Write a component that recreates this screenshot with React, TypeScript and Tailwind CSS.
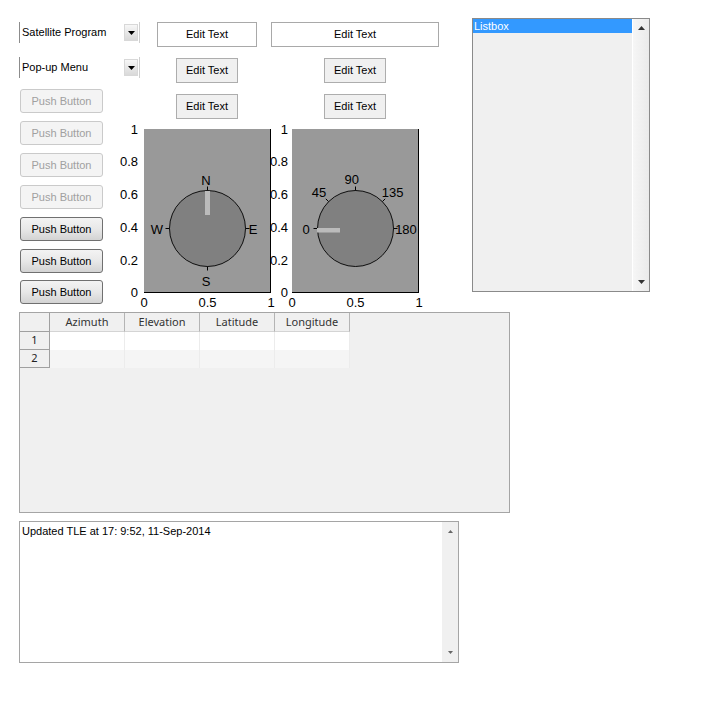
import React from "react";

const yTicks = [
  { v: 1, t: "1" },
  { v: 0.8, t: "0.8" },
  { v: 0.6, t: "0.6" },
  { v: 0.4, t: "0.4" },
  { v: 0.2, t: "0.2" },
  { v: 0, t: "0" },
];

function Arrow({ down, color = "#000", small }: { down?: boolean; color?: string; small?: boolean }) {
  const w = small ? 5 : 7;
  const h = small ? 3 : 4;
  return (
    <svg width={w} height={h} viewBox={`0 0 ${w} ${h}`} className="block">
      <path d={down ? `M0 0H${w}L${w / 2} ${h}Z` : `M0 ${h}H${w}L${w / 2} 0Z`} fill={color} />
    </svg>
  );
}

function Popup({ label }: { label: string }) {
  return (
    <div className="ml-[19px] w-[121px] h-[21px] flex items-center border-l border-l-[#8c8c8c] border-r border-r-[#d0d0d0] bg-white">
      <span className="pl-[2px] flex-1 whitespace-nowrap">{label}</span>
      <div className="mr-px w-[14px] h-[17px] flex items-center justify-center bg-linear-to-b from-[#f7f7f7] to-[#d9d9d9] border border-[#d8d8d8]">
        <Arrow down />
      </div>
    </div>
  );
}

function EditText({ className, gray }: { className: string; gray?: boolean }) {
  return (
    <div
      className={`h-[25px] flex items-center justify-center border whitespace-nowrap ${
        gray ? "bg-[#f0f0f0] border-[#adadad]" : "bg-white border-[#a9a9a9]"
      } ${className}`}
    >
      Edit Text
    </div>
  );
}

function PushButton({ enabled }: { enabled?: boolean }) {
  return enabled ? (
    <div className="h-[24px] flex items-center justify-center rounded-[3px] border border-[#707070] bg-linear-to-b from-[#f3f3f3] via-[#e8e8e8] to-[#d3d3d3] text-black">
      Push Button
    </div>
  ) : (
    <div className="h-[24px] flex items-center justify-center rounded-[3px] border border-[#cacaca] bg-[#f4f4f4] text-[#a0a0a0]">
      Push Button
    </div>
  );
}

function Axes({ w, px, labelEnd, children }: { w: number; px: number; labelEnd: number; children: React.ReactNode }) {
  const top = 10;
  const h = 163.5;
  const pw = 127;
  const yAt = (v: number) => top + h - v * h;
  return (
    <svg width={w} height={193} className="block overflow-visible" fontFamily="Liberation Sans, Arial, sans-serif" fontSize={13}>
      <rect x={px} y={top} width={pw} height={164} fill="#999999" />
      {children}
      <line x1={px} y1={173.5} x2={px + pw} y2={173.5} stroke="#000" />
      <line x1={px + pw - 0.5} y1={top} x2={px + pw - 0.5} y2={174} stroke="#000" />
      {yTicks.map((t) => (
        <text key={t.t} x={labelEnd} y={yAt(t.v) + 4.7} textAnchor="end">
          {t.t}
        </text>
      ))}
      {[
        { x: px, t: "0" },
        { x: px + 63.5, t: "0.5" },
        { x: px + 127, t: "1" },
      ].map((t) => (
        <text key={t.t} x={t.x} y={188.2} textAnchor="middle">
          {t.t}
        </text>
      ))}
    </svg>
  );
}

function Dial({ cx, cy, angles }: { cx: number; cy: number; angles: number[] }) {
  return (
    <>
      <circle cx={cx} cy={cy} r={38} fill="#808080" stroke="#000" strokeWidth={0.9} />
      {angles.map((a) => {
        const r = (a * Math.PI) / 180;
        return (
          <line
            key={a}
            x1={cx + Math.cos(r) * 38}
            y1={cy - Math.sin(r) * 38}
            x2={cx + Math.cos(r) * 42}
            y2={cy - Math.sin(r) * 42}
            stroke="#000"
          />
        );
      })}
    </>
  );
}

export default function App() {
  return (
    <div className="w-[707px] h-[702px] bg-white overflow-hidden font-['Liberation_Sans',Arial,sans-serif] text-[11px] text-black">
      <div className="flex">
        <div className="w-[472px] flex flex-col">
          {/* row 1 */}
          <div className="flex items-start mt-[22px] h-[25px]">
            <Popup label="Satellite Program" />
            <EditText className="ml-[17px] w-[100px]" />
            <EditText className="ml-[14px] w-[168px]" />
          </div>

          {/* row 2 */}
          <div className="flex items-start mt-[10px] h-[26px]">
            <Popup label="Pop-up Menu" />
            <EditText gray className="mt-px ml-[36px] w-[62px]" />
            <EditText gray className="mt-px ml-[86px] w-[62px]" />
          </div>

          {/* buttons + axes */}
          <div className="flex items-start mt-[6px]">
            <div className="ml-[20px] w-[83px] flex flex-col gap-2">
              <PushButton />
              <PushButton />
              <PushButton />
              <PushButton />
              <PushButton enabled />
              <PushButton enabled />
              <div className="-mt-px">
                <PushButton enabled />
              </div>
            </div>
            <div className="flex flex-col">
              <div className="flex mt-[5px] ml-[73px]">
                <EditText gray className="w-[62px]" />
                <EditText gray className="ml-[86px] w-[62px]" />
              </div>
              <div className="flex">
                <Axes w={168} px={41} labelEnd={35}>
                  <Dial cx={104.5} cy={109.5} angles={[90, 270, 180, 0]} />
                  <rect x={102} y={72} width={5} height={24} fill="#bbbbbb" />
                  <text x={103} y={65.7} textAnchor="middle">N</text>
                  <text x={103} y={166.7} textAnchor="middle">S</text>
                  <text x={54} y={114.7} textAnchor="middle">W</text>
                  <text x={150} y={114.7} textAnchor="middle">E</text>
                </Axes>
                <Axes w={148} px={21} labelEnd={17}>
                  <Dial cx={84.5} cy={109.5} angles={[180, 135, 90, 45, 0]} />
                  <rect x={46} y={109} width={23} height={4.5} fill="#bbbbbb" />
                  <text x={35} y={115.2} textAnchor="middle">0</text>
                  <text x={48} y={77.7} textAnchor="middle">45</text>
                  <text x={80.7} y={64.9} textAnchor="middle">90</text>
                  <text x={121.7} y={77.7} textAnchor="middle">135</text>
                  <text x={135} y={115.2} textAnchor="middle">180</text>
                </Axes>
              </div>
            </div>
          </div>
        </div>

        {/* listbox */}
        <div className="mt-[18px] w-[178px] h-[274px] border border-[#8a8a8a] bg-[#f0f0f0] flex">
          <div className="flex-1">
            <div className="h-[14px] leading-[14px] bg-[#3399ff] text-white pl-px">Listbox</div>
          </div>
          <div className="w-[17px] border-l border-l-white bg-linear-to-r from-[#f6f6f6] to-[#eaeaea] flex flex-col items-center justify-between py-[7px]">
            <Arrow color="#333" />
            <Arrow down color="#333" />
          </div>
        </div>
      </div>

      {/* table */}
      <div className="ml-[19px] w-[491px] h-[201px] border border-[#a5a5a5] bg-[#f0f0f0] font-['Noto_Sans',sans-serif] text-[11px] flex flex-col">
        <div className="flex h-[19px]">
          <div className="w-[30px] border-r border-b border-[#a0a0a0]" />
          {["Azimuth", "Elevation", "Latitude", "Longitude"].map((c) => (
            <div key={c} className="w-[75px] border-r border-r-[#b4b4b4] border-b border-b-[#d4d4d4] flex items-center justify-center text-[#333]">
              {c}
            </div>
          ))}
        </div>
        {["1", "2"].map((r, i) => (
          <div key={r} className="flex h-[18px]">
            <div className="w-[30px] border-r border-b border-[#a0a0a0] flex items-center justify-center text-[#222]">{r}</div>
            {[0, 1, 2, 3].map((c) => (
              <div key={c} className={`w-[75px] border-r border-r-[#ececec] ${i === 0 ? "bg-white" : "bg-[#f5f5f5]"}`} />
            ))}
          </div>
        ))}
      </div>

      {/* status text */}
      <div className="mt-[8px] ml-[19px] w-[440px] h-[142px] border border-[#a5a5a5] flex">
        <div className="flex-1 pl-[2px] pt-[3px] leading-[13px] whitespace-nowrap">Updated TLE at 17: 9:52, 11-Sep-2014</div>
        <div className="w-[16px] bg-[#f0f0f0] flex flex-col items-center justify-between pt-[8px] pb-[8px]">
          <Arrow small color="#666" />
          <Arrow small down color="#666" />
        </div>
      </div>
    </div>
  );
}
